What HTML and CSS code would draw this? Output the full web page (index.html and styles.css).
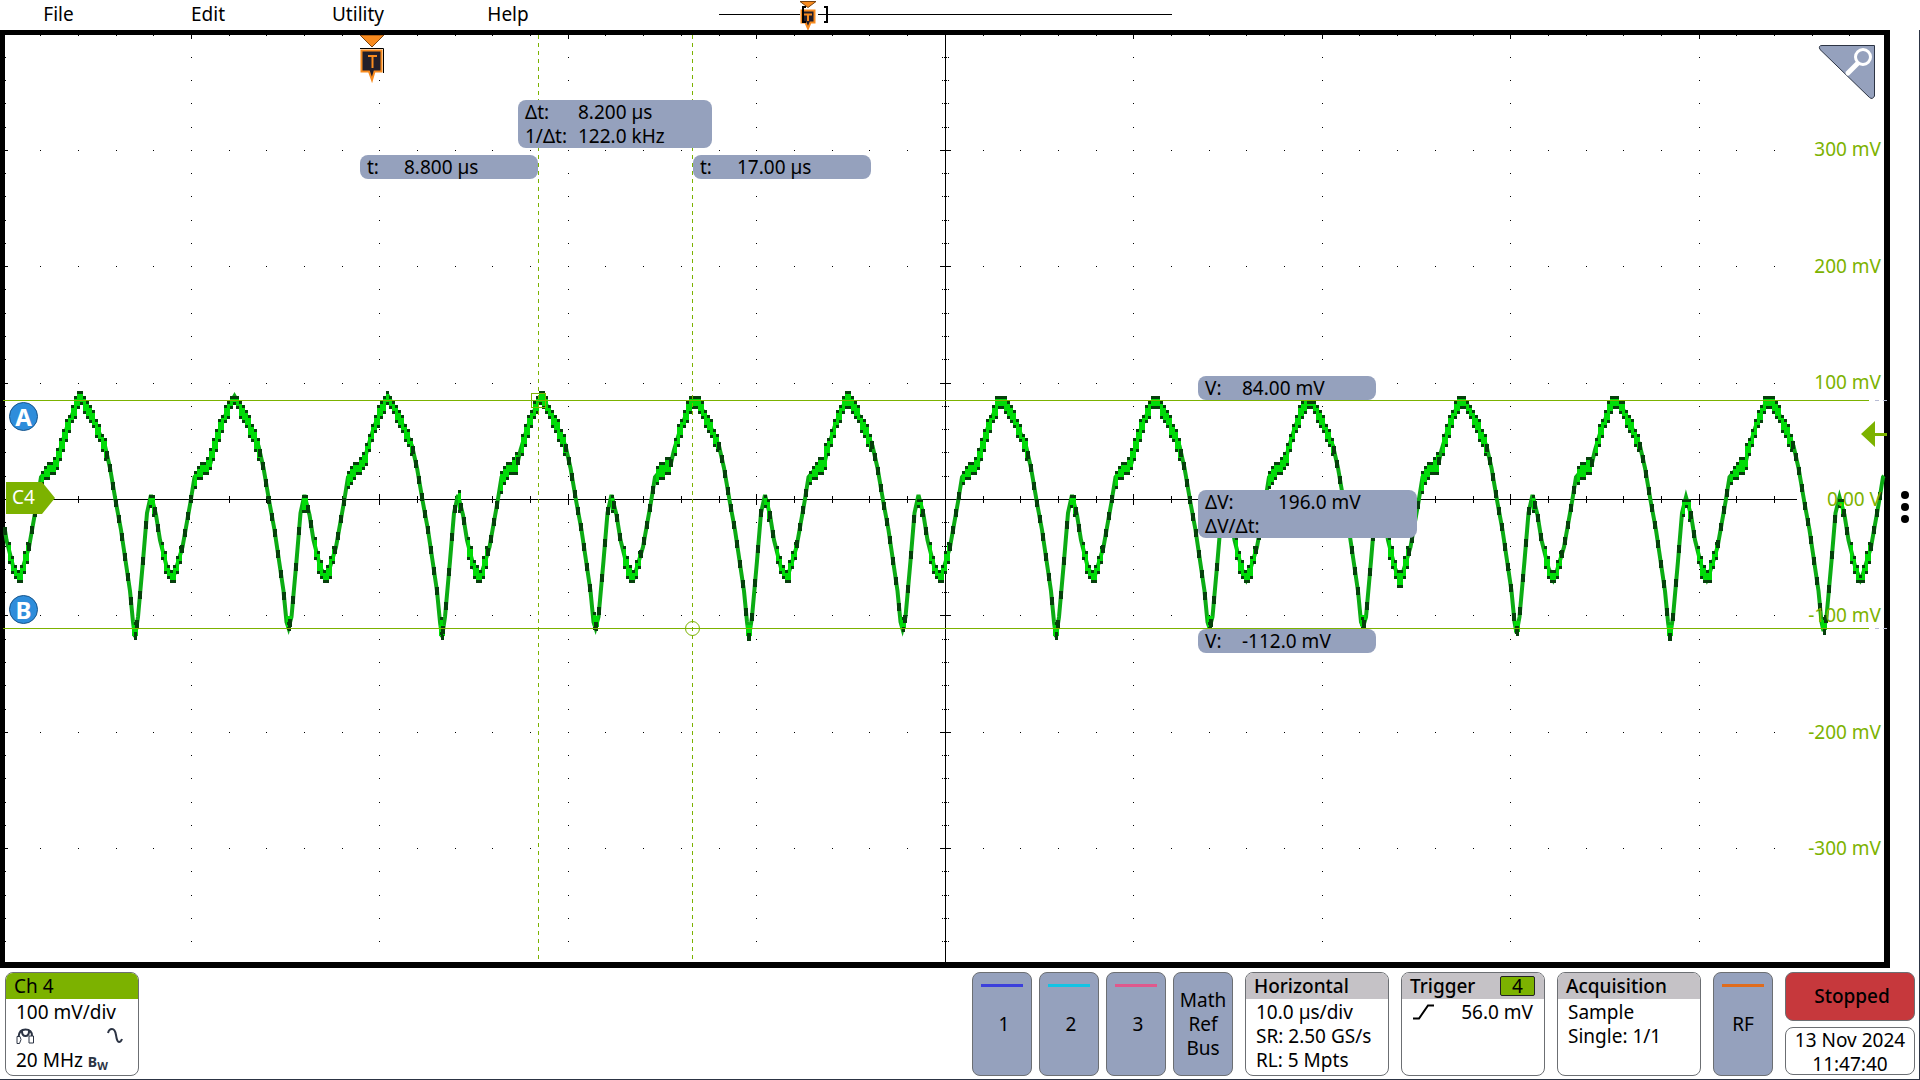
FILE: index.html
```html
<!DOCTYPE html>
<html lang="en">
<head>
<meta charset="utf-8">
<title>Oscilloscope</title>
<link rel="stylesheet" href="styles.css">
</head>
<body>
<header class="menubar">
  <nav class="menu">
    <button type="button">File</button>
    <button type="button">Edit</button>
    <button type="button">Utility</button>
    <button type="button">Help</button>
  </nav>
  <svg class="record" viewBox="0 0 454 30" role="img" aria-label="Record position">
    <path class="ink" d="M0 14.500H81M99 14.500H453"/>
    <path class="orange" d="M81 1.500h16l-8 6z"/>
    <path class="marker" d="M82.500 10.500h13v12h-4l-2.500 6-2.500-6h-4z"/>
    <path class="letter" d="M85 14.500h8M89 14v7"/>
    <path class="bracket" d="M87 7h-3v15h3M105 7h3v15h-3"/>
  </svg>
</header>

<main class="screen">
  <section class="plot" aria-label="Waveform view">
    <svg class="canvas" viewBox="0 0 1879 927" preserveAspectRatio="none">
      <g id="grid" class="grid"></g>
      <g id="trace"></g>
      <g class="cursors">
        <path d="M-2 365.500H1864M-2 593.500H1864"/>
        <path class="dashed" d="M533.500 0V927M687.500 0V927"/>
        <rect x="526.500" y="358.500" width="14" height="14"/>
        <circle cx="687.500" cy="593.500" r="7"/>
        <path class="faint" d="M1870 365.500h4m4 0h4M1870 593.500h4m4 0h4"/>
      </g>
    </svg>

    <span class="scale" style="--y:114">300 mV</span>
    <span class="scale" style="--y:231">200 mV</span>
    <span class="scale" style="--y:347">100 mV</span>
    <span class="scale" style="--y:464">0.00 V</span>
    <span class="scale" style="--y:580">-100 mV</span>
    <span class="scale" style="--y:697">-200 mV</span>
    <span class="scale" style="--y:813">-300 mV</span>

    <svg class="pin trigger-flag" style="--x:355;--y:0" width="24" height="48" viewBox="0 0 24 48">
      <path class="orange" d="M0 0h24L12 12z"/>
      <path class="ink" d="M0 13.500h23.500V38"/>
      <path class="marker" d="M1.500 15.500h20v21h-7L12 45l-3-8.500H1.500z"/>
      <path class="letter" d="M8 21h9M12.500 21v12"/>
    </svg>

    <button type="button" class="pin zoom" style="--x:1813;--y:9" aria-label="Zoom">
      <svg width="58" height="56" viewBox="0 0 58 56">
        <path class="corner" d="M4 1.500h52.500V52q-2 4-5 1.500L2 5.500Q0 1.500 4 1.500z"/>
        <path class="handle" d="M41.500 17.500L30 29"/>
        <circle class="lens" cx="45" cy="13" r="7.500"/>
      </svg>
    </button>

    <dl class="pin readout wide" style="--x:513;--y:65"><dt>Δt:</dt><dd>8.200 µs</dd><dt>1/Δt:</dt><dd>122.0 kHz</dd></dl>
    <dl class="pin readout" style="--x:355;--y:120"><dt>t:</dt><dd>8.800 µs</dd></dl>
    <dl class="pin readout" style="--x:688;--y:120"><dt>t:</dt><dd>17.00 µs</dd></dl>
    <dl class="pin readout" style="--x:1193;--y:341"><dt>V:</dt><dd>84.00 mV</dd></dl>
    <dl class="pin readout widest" style="--x:1193;--y:455"><dt>ΔV:</dt><dd>196.0 mV</dd><dt>ΔV/Δt:</dt><dd></dd></dl>
    <dl class="pin readout" style="--x:1193;--y:594"><dt>V:</dt><dd>-112.0 mV</dd></dl>

    <span class="pin badge" style="--x:4;--y:367">A</span>
    <span class="pin badge" style="--x:4;--y:560">B</span>
    <span class="pin channel-tag" style="--x:1;--y:447">C4</span>

    <svg class="pin" style="--x:1856;--y:386" width="26" height="26" viewBox="0 0 26 26">
      <path class="level" d="M14 0v12h12v3H14v11L0 13z"/>
    </svg>
  </section>
  <button type="button" class="drawer" aria-label="More"><i></i><i></i><i></i></button>
</main>

<footer class="settings">
  <button type="button" class="panel channel">
    <span class="head green">Ch 4</span>
    <span class="body">
      <span>100 mV/div</span>
      <span class="icons">
        <svg width="20" height="18" viewBox="0 0 20 18"><path class="probe" d="M2.500 10Q3 2.500 9.500 2.500T16 9M6 4q0 5 3.500 5T13 4"/><path class="probe fine" d="M1 9.500h3l1 3-1.500 4H1zM13 9h4.500v7H13z"/></svg>
        <svg width="16" height="18" viewBox="0 0 16 18"><path class="probe" d="M1 6q1-4 4-4 3 0 4 6 1 7 3 7 2 0 3-3"/></svg>
      </span>
      <span>20 MHz <span class="bw">B<sub>W</sub></span></span>
    </span>
  </button>

  <div class="group">
    <button type="button" class="panel key numbered"><i class="stripe blue"></i>1</button>
    <button type="button" class="panel key numbered"><i class="stripe cyan"></i>2</button>
    <button type="button" class="panel key numbered"><i class="stripe pink"></i>3</button>
    <button type="button" class="panel key">Math<br>Ref<br>Bus</button>
  </div>

  <button type="button" class="panel info">
    <span class="head">Horizontal</span>
    <span class="body"><span>10.0 µs/div</span><span>SR: 2.50 GS/s</span><span>RL: 5 Mpts</span></span>
  </button>
  <button type="button" class="panel info">
    <span class="head">Trigger <b class="source">4</b></span>
    <span class="body"><span class="icons"><svg width="24" height="16" viewBox="0 0 24 16"><path class="edge" d="M1 14.500h6L16 1.500h6"/></svg>56.0 mV</span></span>
  </button>
  <button type="button" class="panel info">
    <span class="head">Acquisition</span>
    <span class="body"><span>Sample</span><span>Single: 1/1</span></span>
  </button>
  <button type="button" class="panel key"><i class="stripe rf"></i>RF</button>
  <div class="status">
    <button type="button" class="panel stopped">Stopped</button>
    <time class="panel clock" datetime="2024-11-13T11:47:40">13 Nov 2024<br>11:47:40</time>
  </div>
</footer>
<script src="scope.js"></script>
</body>
</html>
```
FILE: styles.css
```css
* { box-sizing: border-box; }

body {
  margin: 0;
  min-height: 100vh;
  display: flex;
  flex-direction: column;
  background: #fff;
  color: #000;
  font: 19px/24px "Noto Sans", "Open Sans", sans-serif;
}

button {
  margin: 0;
  padding: 0;
  border: 0;
  background: none;
  color: inherit;
  font: inherit;
}

svg { display: block; }

/* Menu bar */
.menubar { display: flex; align-items: center; height: 30px; }
.menu { display: flex; gap: 32px; width: 719px; }
.menu button { width: 117px; height: 30px; padding-bottom: 2px; }
.menu button + button { width: 118px; }
.record { width: 454px; height: 30px; }

.ink { fill: none; stroke: #000; }
.orange { fill: #f88b1f; stroke: #7a4310; stroke-width: 1; }
.marker { fill: #231f2a; stroke: #f88b1f; stroke-width: 2; }
.letter { fill: none; stroke: #f88b1f; stroke-width: 2; }
.bracket { fill: none; stroke: #000; stroke-width: 2; }

/* Waveform view */
.screen { flex: 1; display: flex; }
.plot {
  position: relative;
  flex: 1;
  border: solid #000;
  border-width: 5px 6px 6px 5px;
}
.canvas {
  position: absolute;
  inset: 0;
  width: 100%;
  height: 100%;
  overflow: visible;
}
.grid { fill: #000; shape-rendering: crispEdges; }
.band { fill: #00dc08; }
.line { fill: none; stroke: #0cac14; stroke-width: 4; }
.dot { fill: #06400c; }
.cursors { fill: none; stroke: #7cb200; }
.dashed { stroke-dasharray: 4 4; }
.faint { stroke: #b8bcd4; }

.pin {
  position: absolute;
  left: calc(var(--x) / 1879 * 100%);
  top: calc(var(--y) / 927 * 100%);
}
.scale {
  position: absolute;
  right: 3px;
  top: calc(var(--y) / 927 * 100%);
  margin-top: -12px;
  color: #7cb200;
}
.readout {
  display: grid;
  grid-template-columns: 37px 1fr;
  width: 178px;
  margin: 0;
  padding-left: 7px;
  border-radius: 8px;
  background: #95a1bd;
  white-space: nowrap;
}
.readout dd { margin: 0; }
.wide { width: 194px; grid-template-columns: 53px 1fr; }
.widest { width: 219px; grid-template-columns: 73px 1fr; }

.badge {
  width: 29px;
  height: 29px;
  border: 1px solid #17558c;
  border-radius: 50%;
  background: #2e8ddb;
  color: #fff;
  font-weight: bold;
  font-size: 24px;
  line-height: 27px;
  text-align: center;
}
.channel-tag {
  width: 49px;
  height: 32px;
  padding-left: 6px;
  background: #7cb200;
  clip-path: polygon(0 0, 36px 0, 100% 50%, 36px 100%, 0 100%);
  color: #fff;
  line-height: 30px;
}
.level { fill: #7cb200; }
.corner { fill: #95a1bd; stroke: #2c3444; }
.handle { stroke: #fff; stroke-width: 5; stroke-linecap: round; }
.lens { fill: #95a1bd; stroke: #fff; stroke-width: 3; }

.drawer {
  display: flex;
  flex-direction: column;
  align-items: center;
  justify-content: center;
  gap: 4px;
  width: 30px;
  padding-top: 16px;
  border-right: 1px solid #2c3444;
}
.drawer i { width: 8px; height: 8px; border-radius: 50%; background: #000; }

/* Settings bar */
.settings {
  display: flex;
  gap: 12px;
  height: 112px;
  padding: 4px 4px 4px 5px;
  border: solid #2c3444;
  border-width: 0 1px 1px 0;
}
.group { display: flex; gap: 7px; margin-left: auto; }
.panel {
  display: block;
  height: 104px;
  border: 1px solid #6c6f73;
  border-radius: 8px;
  background: #fff;
  overflow: hidden;
}
.channel { width: 134px; }
.info { width: 144px; }
.channel, .info { display: flex; flex-direction: column; text-align: left; }
.head {
  display: flex;
  justify-content: space-between;
  align-items: center;
  width: 100%;
  height: 26px;
  padding: 0 9px 0 8px;
  background: #c5c2c6;
  font-weight: 500;
}
.green { background: #7cb200; font-weight: 400; }
.body { display: flex; flex-direction: column; width: 100%; padding: 1px 11px 0 10px; white-space: nowrap; }
.icons { display: flex; justify-content: space-between; align-items: center; height: 24px; }
.channel .icons { padding-right: 4px; }
.source {
  width: 35px;
  height: 20px;
  border: 1px solid #222;
  border-radius: 2px;
  background: #7cb200;
  font-weight: 400;
  line-height: 18px;
  text-align: center;
}
.bw { color: #2c3444; font-size: 14px; font-weight: bold; }
.bw sub { font-size: 11px; line-height: 10px; vertical-align: -3px; }
.probe { fill: none; stroke: #2c3444; stroke-width: 2; }
.fine { stroke-width: 1; }
.edge { fill: none; stroke: #000; stroke-width: 2; }

.key { position: relative; width: 60px; background: #95a1bd; text-align: center; }
.numbered { padding-left: 4px; }
.stripe { position: absolute; top: 11px; left: 8px; right: 8px; height: 3px; }
.blue { background: #3c40dc; }
.cyan { background: #12c4e4; }
.pink { background: #e0588c; }
.rf { background: #e06c1c; }

.status { display: flex; flex-direction: column; gap: 6px; width: 130px; }
.status .panel { width: 100%; height: 49px; text-align: center; }
.status .stopped { padding-left: 4px; background: #c6383c; font-weight: 500; }
.status .clock { line-height: 24px; }
```
FILE: scope.js
```js
// Draws the graticule and the channel 4 trace in plot units (1879 x 927).
const NS = "http://www.w3.org/2000/svg";
const AXIS_X = 940, AXIS_Y = 464, DIV_X = 188.4, DIV_Y = 116.4;

function box(parent, x, y, w, h, cls) {
  const r = document.createElementNS(NS, "rect");
  r.setAttribute("x", Math.round(x));
  r.setAttribute("y", Math.round(y));
  r.setAttribute("width", w);
  r.setAttribute("height", h);
  if (cls) r.setAttribute("class", cls);
  parent.appendChild(r);
}

const grid = document.getElementById("grid");
box(grid, AXIS_X, 0, 1, 927);
box(grid, 0, AXIS_Y, 1792, 1);
for (let i = -24; i <= 24; i++) {
  const x = AXIS_X + i * DIV_X / 5 - (i < 0 ? 0.4 : 0);
  box(grid, x, 0, 1, i % 5 ? 1 : 4);
  if (x > 1770) continue;
  for (let k = -3; k <= 3; k++) {
    if (k) box(grid, x, AXIS_Y + k * DIV_Y, 1, 1);
  }
  const t = i % 5 ? 3 : 5;
  box(grid, x, AXIS_Y - t, 1, 2 * t + 1);
}
for (let j = -19; j <= 19; j++) {
  const y = AXIS_Y + j * DIV_Y / 5;
  for (let k = -4; k <= 4; k++) {
    if (k) box(grid, AXIS_X + k * DIV_X - (k < 0 ? 0.4 : 0), y, 1, 1);
  }
  box(grid, 0, y, j % 5 ? 1 : 3, 1);
  if (j % 5) {
    box(grid, AXIS_X - 3, y, 1, 1);
    box(grid, AXIS_X - 1, y, 3, 1);
    box(grid, AXIS_X + 3, y, 1, 1);
  } else {
    box(grid, AXIS_X - 5, y, 11, 1);
  }
}

// One cycle: offset from the peak, height on screen, half thickness of the band.
// Heights below 4 are indexes into the values that change from cycle to cycle.
const shape = [
  [-61, 542, 3], [-52, 512, 3], [-44, 467, 2], [-40, 442, 3], [-34, 435, 5], [-24, 428, 6],
  [-21, 415, 3], [-14, 392, 4], [-4, 368, 4], [0, 0, 3], [5, 370, 4], [14, 388, 4], [24, 411, 4],
  [29, 433, 3], [35, 468, 2], [40, 495, 2], [49, 556, 2], [52, 587, 2], [54, 1, 3],
  [57, 582, 2], [62, 526, 2], [66, 478, 2], [70, 2, 2], [75, 480, 3], [79, 505, 3], [86, 533, 3], [91, 3, 3]
];
const peaks = [361, 361, 361, 361, 364, 361, 365, 365, 368, 365, 366, 365, 365];
const dips = [602, 593, 602, 593, 602, 594, 602, 593, 592, 598, 602, 596, 596];
const points = [];
for (let c = -1; c <= 12; c++) {
  const n = Math.max(c, 0) % 13;
  const special = [peaks[n], dips[n], n > 9 ? 462 : 460, n > 6 ? 545 : 541];
  for (const [dx, y, band] of shape) {
    points.push([76 + c * 153.5 + dx, y < 4 ? special[y] : y, band]);
  }
}

function at(x) {
  let i = 1;
  while (i < points.length - 1 && points[i][0] < x) i++;
  const [x0, y0, b0] = points[i - 1], [x1, y1, b1] = points[i];
  const t = (x - x0) / (x1 - x0);
  return [y0 + (y1 - y0) * t, b0 + (b1 - b0) * t];
}

const trace = document.getElementById("trace");
const line = document.createElementNS(NS, "polyline");
const visible = [[0, at(0)[0]], ...points.filter(p => p[0] > 0 && p[0] < 1879), [1879, at(1879)[0]]];
line.setAttribute("points", visible.map(p => p[0] + "," + p[1]).join(" "));
line.setAttribute("class", "line");
trace.appendChild(line);

const dots = document.createElementNS(NS, "g");
const STEP = 3, LEVEL = 4.7;
for (let x = 0; x < 1878; x += STEP) {
  const [ya, ba] = at(x), [yb, bb] = at(x + STEP);
  const top = Math.round((Math.min(ya, yb) - ba) / LEVEL) * LEVEL;
  const bottom = Math.round((Math.max(ya, yb) + bb) / LEVEL) * LEVEL;
  if (Math.abs(ya - yb) > 12) {
    // Steep edges: the line itself, with dark steps where two columns meet.
    box(dots, x - 2, ya - 4, 4, 8, "dot");
    continue;
  }
  box(trace, x, top, 3, Math.round(bottom - top + 2), "band");
  box(dots, x, top - 1, 3, 3, "dot");
  box(dots, x, bottom, 3, 3, "dot");
}
for (const [x, y] of points) {
  if (x > 0 && x < 1876 && y > 590) {
    box(trace, x - 3, y - 12, 6, 11, "band");
    box(dots, x - 1, y - 2, 3, 5, "dot");
  }
}
trace.appendChild(dots);
```
